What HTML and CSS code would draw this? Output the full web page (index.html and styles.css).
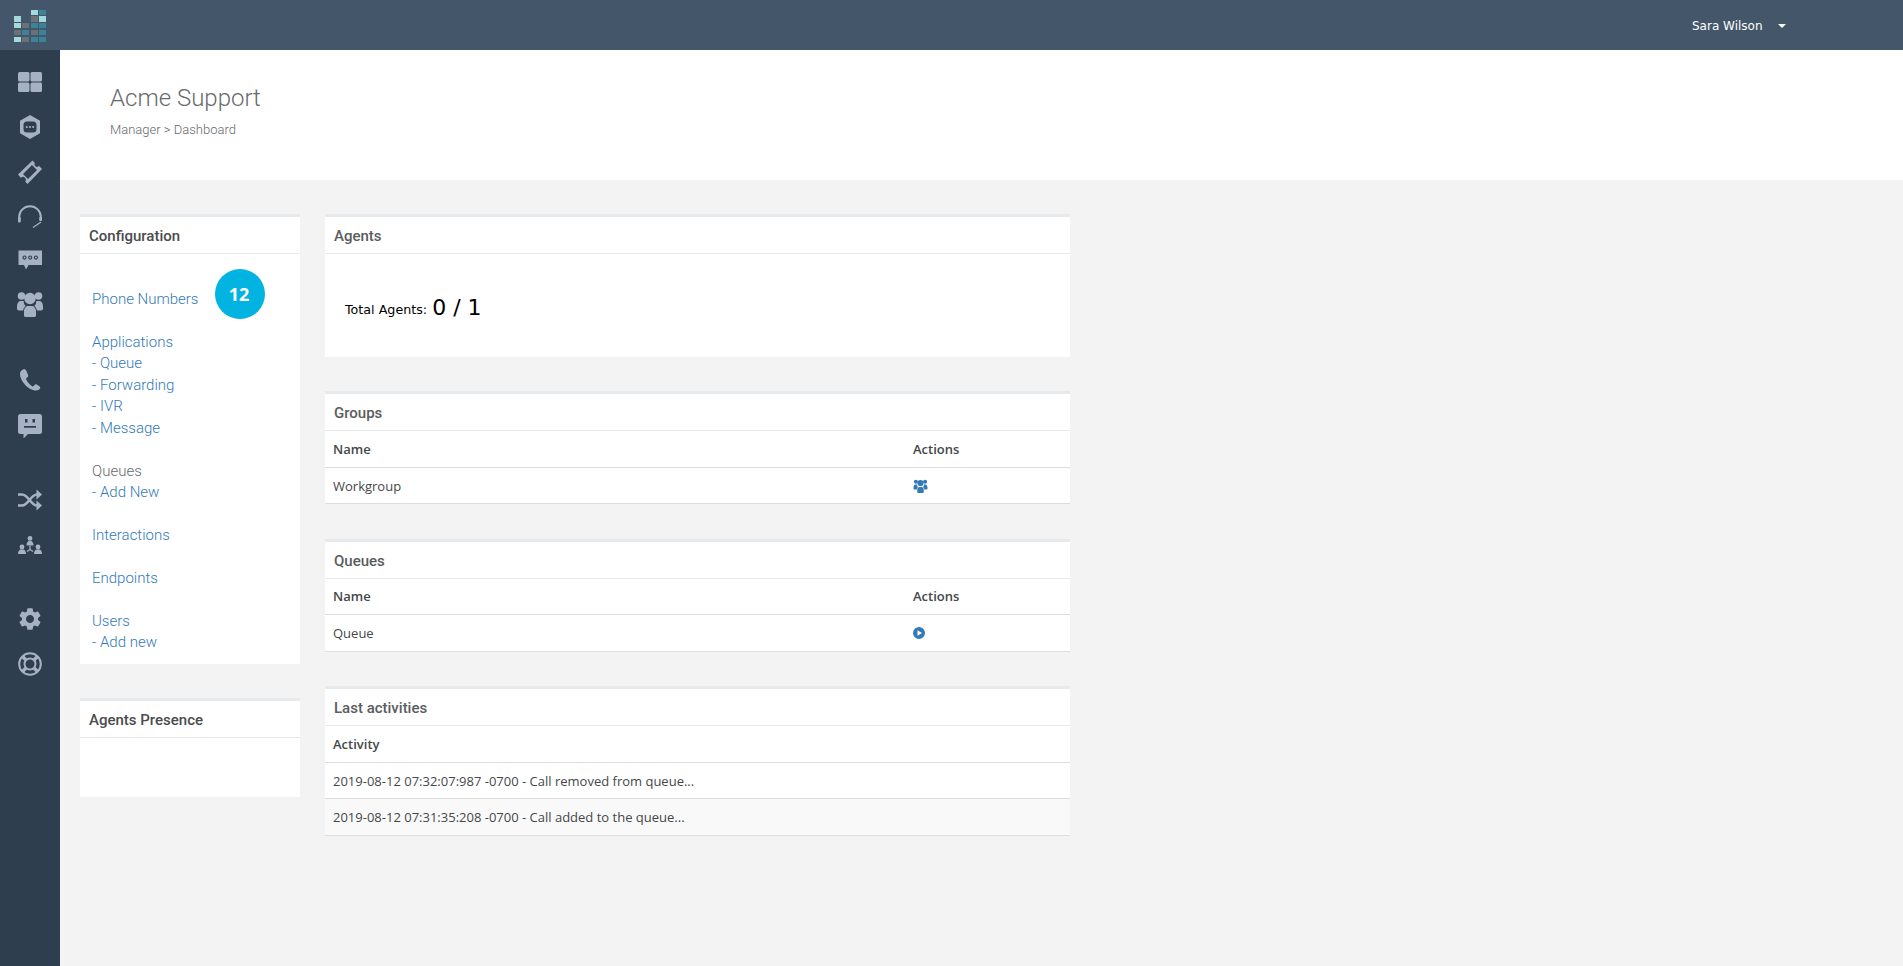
FILE: index.html
```html
<!DOCTYPE html>
<html lang="en">
<head>
<meta charset="utf-8">
<title>Acme Support</title>
<link rel="stylesheet" href="styles.css">
</head>
<body>
<div class="app">
  <header class="topbar">
    <div class="brand">
      <svg class="logo" width="33" height="33" viewBox="0 0 33 33">
        <rect class="lt" x="17" y="0" width="7" height="5"/><rect class="te" x="25" y="0" width="7" height="5"/>
        <rect class="lt" x="0" y="6" width="7" height="6"/><rect class="gr" x="17" y="6" width="7" height="6"/><rect class="lt" x="25" y="6" width="7" height="6"/>
        <rect class="lt" x="0" y="13" width="7" height="5"/><rect class="gr" x="8" y="13" width="7" height="5"/><rect class="te" x="17" y="13" width="7" height="5"/><rect class="te" x="25" y="13" width="7" height="5"/>
        <rect class="gr" x="0" y="20" width="7" height="5"/><rect class="te" x="8" y="20" width="7" height="5"/><rect class="gr" x="17" y="20" width="7" height="5"/><rect class="te" x="25" y="20" width="7" height="5"/>
        <rect class="lt" x="0" y="27" width="7" height="5"/><rect class="gr" x="8" y="27" width="7" height="5"/><rect class="te" x="17" y="27" width="7" height="5"/><rect class="te" x="25" y="27" width="7" height="5"/>
      </svg>
    </div>
    <div class="user"><span>Sara Wilson</span><i class="caret"></i></div>
  </header>

  <nav class="sidebar">
    <div class="nav-group">
      <a class="nav-item"><svg class="ico" viewBox="0 0 24 24"><rect x="0" y="2" width="11.5" height="9.5" rx="1.5"/><rect x="12.5" y="2" width="11.5" height="9.5" rx="1.5"/><rect x="0" y="12.5" width="11.5" height="9.5" rx="1.5"/><rect x="12.5" y="12.5" width="11.5" height="9.5" rx="1.5"/></svg></a>
      <a class="nav-item"><svg class="ico" viewBox="0 0 24 24"><path fill-rule="evenodd" d="M12 0l10 5.800v12.400L12 24 2 18.200V5.800zM9 6.500a3.500 3.500 0 0 0-3.500 3.500v4A3.500 3.500 0 0 0 9 17.500h6a3.500 3.500 0 0 0 3.500-3.500v-4A3.500 3.500 0 0 0 15 6.500z"/><circle cx="8.800" cy="12" r="1.100"/><circle cx="12" cy="12" r="1.100"/><circle cx="15.200" cy="12" r="1.100"/></svg></a>
      <a class="nav-item"><svg class="ico" viewBox="0 0 24 24"><path fill-rule="evenodd" d="M14.500.5l2.400 2.400a1.800 1.800 0 0 0 4 2.800L24 9l-14.500 15-2.400-2.400a1.800 1.800 0 0 0-4.100-3.700L0 14.500zM14 5L5 14l5 5 9-9z"/></svg></a>
      <a class="nav-item"><svg class="ico" viewBox="0 0 24 24"><path class="line" d="M1.200 13V12a10.800 10.800 0 0 1 21.600 0v3"/><rect x="0" y="12" width="2.800" height="5.500" rx="1"/><rect x="21.200" y="12" width="2.800" height="4" rx="1"/><path class="line thin" d="M23 17l-8 5.500"/></svg></a>
      <a class="nav-item nav-item-tight"><svg class="ico" viewBox="0 0 24 24"><path fill-rule="evenodd" d="M0.500 1.500H24v14.500H10.500l-2.500 4.500-2-4.500H.5zM6.500 6.500a2.100 2.100 0 1 0 0 4.200 2.100 2.100 0 0 0 0-4.200zm5.700 0a2.100 2.100 0 1 0 0 4.200 2.100 2.100 0 0 0 0-4.200zm5.700 0a2.100 2.100 0 1 0 0 4.200 2.100 2.100 0 0 0 0-4.200z"/><circle cx="6.500" cy="8.600" r="1"/><circle cx="12.200" cy="8.600" r="1"/><circle cx="17.900" cy="8.600" r="1"/></svg></a>
      <a class="nav-item nav-item-end"><svg class="ico ico-lg" viewBox="0 0 26 26"><circle cx="4.500" cy="5" r="3.800"/><circle cx="21.500" cy="5" r="3.800"/><circle cx="13" cy="7.500" r="5.700"/><path d="M0 16c0-3.500 1.500-6 3.500-6h3.200c0 2 .6 4 2 5-1.500 1-2.400 2.800-2.600 4.500H2c-1.200 0-2-1-2-2zM26 16c0-3.500-1.500-6-3.500-6h-3.200c0 2-.6 4-2 5 1.500 1 2.400 2.800 2.600 4.500H24c1.200 0 2-1 2-2zM7 24.500v-4.500c0-3 2.500-5 4-5h4c1.500 0 4 2 4 5v4.500c0 .8-.7 1.500-1.500 1.500h-9C7.700 26 7 25.300 7 24.500z"/></svg></a>
    </div>
    <div class="nav-group">
      <a class="nav-item"><svg class="ico" viewBox="0 0 24 24"><path d="M5 0.500c-1.500.8-3 2-3 4.500 0 7 8.500 16.500 16 16.500 2 0 3.300-.8 4-2 .5-.8.400-1.500-.3-2l-3-2c-.8-.5-1.500-.3-2 .3l-1 1.200c-.4.500-1 .5-1.500.2-2.500-1.500-4.700-4-6-6.700-.3-.6-.2-1.200.3-1.600l1.200-1c.6-.5.8-1.200.4-2L8.200 1.500C7.500.2 6.200 0 5 .5z"/></svg></a>
      <a class="nav-item"><svg class="ico" viewBox="0 0 24 24"><path fill-rule="evenodd" d="M2.500 0h19A2.500 2.500 0 0 1 24 2.500v15a2.500 2.500 0 0 1-2.500 2.500H10l-4.500 4.500V20h-3A2.500 2.500 0 0 1 0 17.500v-15A2.500 2.500 0 0 1 2.500 0zM7 5v3.500h2.500V5zm7.500 0v3.500H17V5zM6 12v1.800h12V12z"/></svg></a>
    </div>
    <div class="nav-group">
      <a class="nav-item"><svg class="ico" viewBox="0 0 24 24"><path class="line heavy" d="M0 6.500h4c6.500 0 8.500 11 15 11h1M0 17.500h4c6.500 0 8.500-11 15-11h1"/><path d="M18.500 1.500L24 6.500l-5.500 5zM18.500 12.500l5.500 5-5.500 5z"/></svg></a>
      <a class="nav-item"><svg class="ico" viewBox="0 0 24 24"><circle cx="12" cy="5.400" r="2.400"/><path d="M8.500 12.500c0-3 1.500-4.500 2.500-4.500h2c1 0 2.500 1.500 2.500 4.500z"/><circle cx="4" cy="14" r="2.400"/><path d="M0 21c0-3 1.500-4.500 2.500-4.500h3c1 0 2.500 1.500 2.500 4.500z"/><circle cx="20" cy="14" r="2.400"/><path d="M16 21c0-3 1.500-4.500 2.500-4.500h3c1 0 2.500 1.500 2.500 4.500z"/><path class="line thin" d="M12 13v3.500M12 16.500l-3 2M12 16.500l3 2"/></svg></a>
    </div>
    <div class="nav-group">
      <a class="nav-item"><svg class="ico" viewBox="0 0 24 24"><path transform="translate(12 12) scale(1.120) translate(-12 -12)" d="M19.140 12.940c.04-.3.06-.61.06-.94 0-.32-.02-.64-.07-.94l2.030-1.580a.49.49 0 0 0 .12-.61l-1.920-3.320a.488.488 0 0 0-.59-.22l-2.390.96c-.5-.38-1.030-.7-1.620-.94l-.36-2.540a.484.484 0 0 0-.48-.41h-3.840c-.24 0-.43.17-.47.41l-.36 2.540c-.59.24-1.130.57-1.620.94l-2.390-.96c-.22-.08-.47 0-.59.22L2.740 8.870c-.12.21-.08.47.12.61l2.030 1.580c-.05.3-.09.63-.09.94s.02.64.07.94l-2.030 1.580a.49.49 0 0 0-.12.61l1.920 3.320c.12.22.37.29.59.22l2.390-.96c.5.38 1.030.7 1.620.94l.36 2.540c.05.24.24.41.48.41h3.840c.24 0 .44-.17.47-.41l.36-2.540c.59-.24 1.130-.56 1.620-.94l2.390.96c.22.08.47 0 .59-.22l1.920-3.320c.12-.22.07-.47-.12-.61l-2.010-1.580zM12 15.600c-1.980 0-3.600-1.620-3.600-3.600s1.620-3.600 3.600-3.600 3.600 1.620 3.600 3.600-1.620 3.600-3.600 3.600z"/></svg></a>
      <a class="nav-item"><svg class="ico" viewBox="0 0 24 24"><circle class="line" cx="12" cy="12" r="10.800"/><circle class="line" cx="12" cy="12" r="5.500"/><path class="line wide" d="M4.500 4.500l3.500 3.500M19.500 4.500L16 8M4.500 19.500L8 16M19.500 19.500L16 16"/></svg></a>
    </div>
  </nav>

  <main class="content">
    <section class="page-head">
      <h1>Acme Support</h1>
      <p>Manager &gt; Dashboard</p>
    </section>
    <div class="columns">
      <div class="col-left">
        <section class="panel">
          <h2>Configuration</h2>
          <div class="links">
            <div class="link-row"><a>Phone Numbers</a><span class="badge">12</span></div>
            <div class="link-group"><a>Applications</a><a>- Queue</a><a>- Forwarding</a><a>- IVR</a><a>- Message</a></div>
            <div class="link-group"><span class="plain">Queues</span><a>- Add New</a></div>
            <div class="link-group"><a>Interactions</a></div>
            <div class="link-group"><a>Endpoints</a></div>
            <div class="link-group"><a>Users</a><a>- Add new</a></div>
          </div>
        </section>
        <section class="panel">
          <h2>Agents Presence</h2>
          <div class="presence"></div>
        </section>
      </div>
      <div class="col-main">
        <section class="panel">
          <h2 class="soft">Agents</h2>
          <div class="agents"><span class="agents-label">Total Agents:</span> <span class="agents-count">0 / 1</span></div>
        </section>
        <section class="panel">
          <h2 class="soft">Groups</h2>
          <table>
            <thead><tr><th class="name-col">Name</th><th>Actions</th></tr></thead>
            <tbody><tr><td>Workgroup</td><td><svg class="act" width="15" height="14" viewBox="0 0 26 26"><circle cx="4.500" cy="5" r="3.800"/><circle cx="21.500" cy="5" r="3.800"/><circle cx="13" cy="7.500" r="5.700"/><path d="M0 16c0-3.500 1.500-6 3.500-6h3.200c0 2 .6 4 2 5-1.500 1-2.400 2.800-2.600 4.500H2c-1.200 0-2-1-2-2zM26 16c0-3.500-1.500-6-3.500-6h-3.200c0 2-.6 4-2 5 1.500 1 2.400 2.800 2.600 4.500H24c1.200 0 2-1 2-2zM7 24.500v-4.500c0-3 2.500-5 4-5h4c1.500 0 4 2 4 5v4.500c0 .8-.7 1.500-1.500 1.500h-9C7.700 26 7 25.300 7 24.500z"/></svg></td></tr></tbody>
          </table>
        </section>
        <section class="panel">
          <h2 class="soft">Queues</h2>
          <table class="table-queues">
            <thead><tr><th class="name-col">Name</th><th>Actions</th></tr></thead>
            <tbody><tr><td>Queue</td><td><svg class="act" width="12" height="12" viewBox="0 0 12 12"><path fill-rule="evenodd" d="M6 0a6 6 0 1 1 0 12A6 6 0 0 1 6 0zM4.500 3.200v5.600L9 6z"/></svg></td></tr></tbody>
          </table>
        </section>
        <section class="panel">
          <h2 class="soft">Last activities</h2>
          <table>
            <thead><tr><th>Activity</th></tr></thead>
            <tbody>
              <tr><td>2019-08-12 07:32:07:987 -0700 - Call removed from queue...</td></tr>
              <tr class="striped"><td>2019-08-12 07:31:35:208 -0700 - Call added to the queue...</td></tr>
            </tbody>
          </table>
        </section>
      </div>
    </div>
  </main>
</div>
</body>
</html>
```
FILE: styles.css
```css
* { box-sizing: border-box; }
html, body { margin: 0; height: 100%; }
body { font-family: "Roboto", "Liberation Sans", sans-serif; background: #f3f3f4; overflow: hidden; }
.app { display: grid; grid-template-columns: 60px 1fr; grid-template-rows: 50px 1fr; height: 966px; }

.topbar { grid-column: 1 / 3; background: #43566a; display: flex; align-items: center; justify-content: space-between; }
.brand { padding: 10px 0 0 14px; height: 50px; }
.logo { display: block; }
.lt { fill: #a3d9d8; } .gr { fill: #6c7177; } .te { fill: #3c8399; }
.user { display: flex; align-items: center; width: 211px; padding-top: 2px; font-family: "DejaVu Sans", sans-serif; font-size: 12px; color: #fff; }
.caret { margin-left: 15px; border-top: 4px solid #fff; border-left: 4px solid transparent; border-right: 4px solid transparent; }

.sidebar { background: #2f3e4e; padding-top: 9px; }
.nav-group { margin-bottom: 29px; }
.nav-item { display: flex; height: 45px; align-items: center; justify-content: center; }
.nav-item-tight { height: 43px; }
.nav-item-end { height: 47px; padding-bottom: 4px; }
.ico { width: 24px; height: 24px; fill: #a6b1c6; }
.ico-lg { width: 26px; height: 26px; }
.ico .line { fill: none; stroke: #a6b1c6; stroke-width: 2; }
.ico .thin { stroke-width: 1.300; }
.ico .heavy { stroke-width: 2.600; }
.ico .wide { stroke-width: 3.500; }

.content { min-width: 0; }
.page-head { background: #fff; height: 130px; padding: 33px 50px 0; }
.page-head h1 { margin: 0; font-weight: 300; font-size: 24px; line-height: 30px; color: #676a6c; }
.page-head p { margin: 8px 0 0; font-size: 13px; font-weight: 300; line-height: 18px; color: #676a6c; }

.columns { display: flex; align-items: flex-start; gap: 25px; padding: 34px 0 0 20px; }
.col-left { width: 220px; display: flex; flex-direction: column; gap: 34px; }
.col-main { width: 745px; display: flex; flex-direction: column; gap: 34.430px; }

.panel { background: #fff; border-top: 3px solid #e7eaec; }
.panel h2 { margin: 0; height: 37px; padding: 0 9px; border-bottom: 1px solid #e7eaec; font-size: 15px; font-weight: 500; line-height: 39px; color: #4a4c4e; }
.panel h2.soft { color: #5a5c5e; }

.links { padding: 12px 12px 9px; font-size: 15px; font-weight: 300; line-height: 21.430px; height: 410px; }
.links a { display: block; color: #337ab7; }
.link-row { display: flex; align-items: flex-start; height: 66px; padding-top: 23px; }
.link-row a { width: 123px; }
.badge { width: 50px; height: 50px; margin-top: -20px; padding-right: 2px; border-radius: 50%; background: #00b3e0; color: #fff; font-family: "Open Sans", sans-serif; font-weight: 700; font-size: 18px; line-height: 50px; text-align: center; }
.link-group { margin-bottom: 21.430px; }
.plain { display: block; color: #676a6c; }
.presence { height: 59px; }

.agents { height: 103px; padding: 41px 20px 0; color: #000; font-family: "DejaVu Sans", sans-serif; }
.agents-label { font-size: 12.700px; vertical-align: 1px; }
.agents-count { font-size: 22px; }

table { width: 100%; border-collapse: separate; border-spacing: 0; font-family: "Open Sans", sans-serif; font-size: 13px; color: #44474a; }
th, td { text-align: left; padding: 0 8px; border-bottom: 1px solid #dddddd; }
th { height: 37px; font-weight: 600; }
td { height: 36px; }
.table-queues th { height: 36px; }
.table-queues td { height: 37px; }
.name-col { width: 580px; }
.striped td { height: 37px; background: #f9f9f9; }
.act { display: block; fill: #337ab7; }
```
